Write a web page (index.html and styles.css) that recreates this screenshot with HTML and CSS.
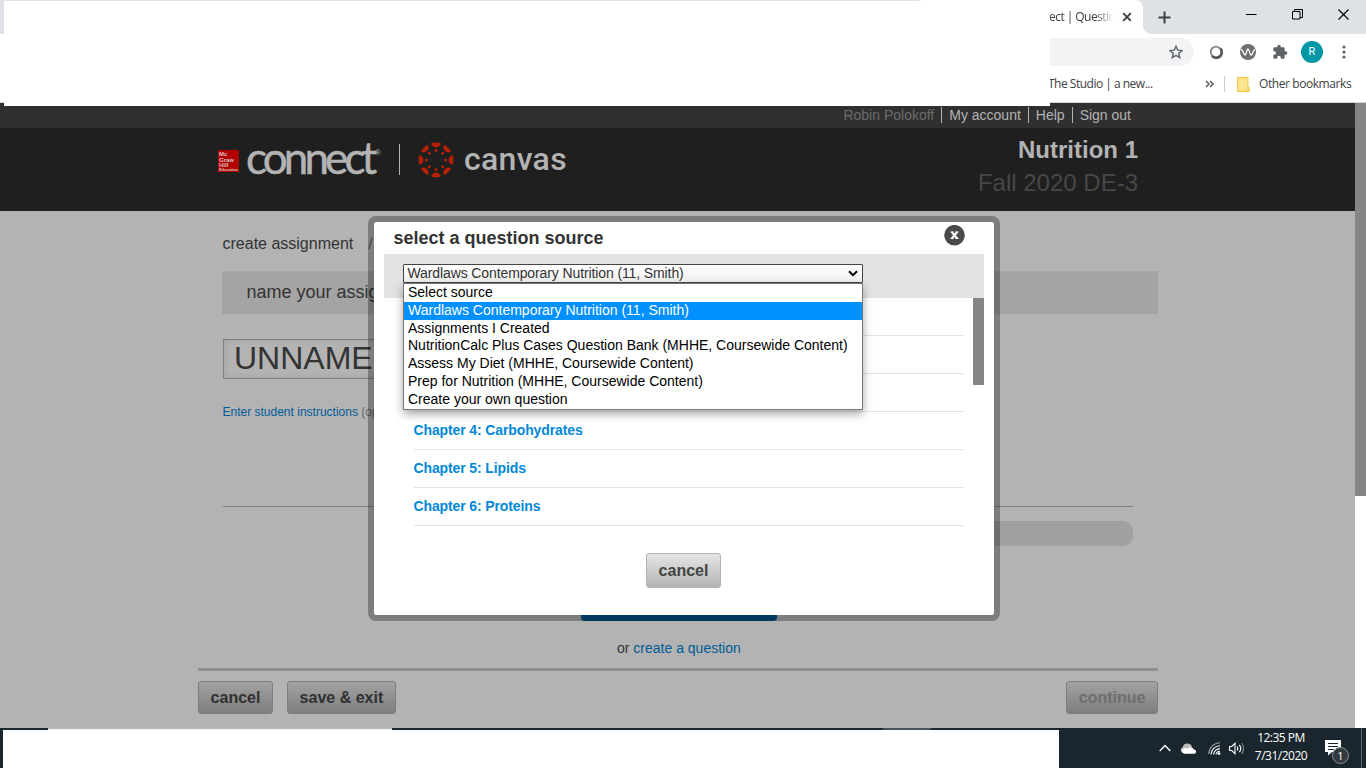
FILE: index.html
```
<!DOCTYPE html>
<html lang="en">
<head>
    <meta charset="UTF-8">
    <meta name="viewport" content="width=device-width, initial-scale=1.0">
    <title>Connect | Question source</title>
    <link rel="stylesheet" href="styles.css">
</head>
<body>
    <div class="browser">
        <div class="tab-strip">
            <div class="tab">
                <span class="tab-title">ect | Questic</span>
                <svg class="tab-close" width="10" height="10" viewBox="0 0 10 10"><path d="M1.2 1.2l7.6 7.6M8.8 1.2L1.2 8.8" stroke="#3c4043" stroke-width="1.9"/></svg>
            </div>
            <svg class="new-tab" width="13" height="13" viewBox="0 0 13 13"><path d="M6.5 .5v12M.5 6.5h12" stroke="#3c4043" stroke-width="2"/></svg>
            <div class="window-buttons">
                <svg width="11" height="11" viewBox="0 0 11 11"><path d="M0 5.5h10.5" stroke="#000"/></svg>
                <svg width="11" height="11" viewBox="0 0 11 11"><path d="M.5 2.5h7.5v7.5H.5zM2.5 2.5v-2h8v8H8" fill="none" stroke="#000"/></svg>
                <svg width="11" height="11" viewBox="0 0 11 11"><path d="M.5 .5l10 10M10.5 .5l-10 10" stroke="#000" stroke-width="1.1"/></svg>
            </div>
        </div>
        <div class="toolbar">
            <div class="omnibox">
                <svg width="14" height="14" viewBox="0 0 14 14"><path d="M7 1.2l1.7 4 4.3.4-3.300 2.800 1 4.200L7 10.400l-3.700 2.200 1-4.200L1 5.600l4.300-.4z" fill="none" stroke="#5f6368" stroke-width="1.4"/></svg>
            </div>
            <svg class="ext" width="14" height="14" viewBox="0 0 14 14"><circle cx="7" cy="7" r="5.3" fill="#fff" stroke="#858585" stroke-width="1.8"/><path d="M3 11a5.300 5.300 0 0 0 8.500-7.500" fill="none" stroke="#555" stroke-width="2.4"/></svg>
            <svg class="ext" width="16" height="16" viewBox="0 0 16 16"><circle cx="8" cy="8" r="8" fill="#6f6f6f"/><path d="M.8 5.5C3 5 3.5 11 5 11s1.5-6 3-6 1.500 6 3.200 6S13 5.500 15 5.500" fill="none" stroke="#fff" stroke-width="1.3"/></svg>
            <svg class="ext" width="16" height="16" viewBox="0 0 24 24"><path d="M20.5 11H19V7c0-1.100-.9-2-2-2h-4V3.500a2.500 2.500 0 0 0-5 0V5H4c-1.100 0-2 .9-2 2v3.800h1.500a2.700 2.700 0 0 1 0 5.400H2V20c0 1.100.9 2 2 2h3.800v-1.500a2.700 2.700 0 0 1 5.400 0V22H17c1.100 0 2-.9 2-2v-4h1.500a2.500 2.500 0 0 0 0-5z" fill="#5f6368"/></svg>
            <span class="profile">R</span>
            <svg class="menu-dots" width="4" height="14" viewBox="0 0 4 14"><g fill="#5f6368"><circle cx="2" cy="2" r="1.6"/><circle cx="2" cy="7" r="1.6"/><circle cx="2" cy="12" r="1.6"/></g></svg>
        </div>
        <div class="bookmarks">
            <span class="bookmark-studio">The Studio | a new...</span>
            <svg class="more" width="9" height="8" viewBox="0 0 9 8"><path d="M1 1l3 3-3 3M5 1l3 3-3 3" fill="none" stroke="#5f6368" stroke-width="1.6"/></svg>
            <span class="divider"></span>
            <svg class="folder" width="13" height="15" viewBox="0 0 13 15"><path d="M.6 .6h10.300v10l1.500.2v3.600H.6z" fill="#ffe694" stroke="#f5c84b" stroke-width="1.1"/><path d="M10.900 10.500c-1.200.2-1.500 1.500-1.300 3.500" fill="none" stroke="#f5c84b"/></svg>
            <span class="bookmark-other">Other bookmarks</span>
        </div>
        <div class="blank blank-top"></div>
    </div>

    <div class="viewport">
        <div class="page">
            <div class="account-bar">
                <span class="user">Robin Polokoff</span>
                <a>My account</a>
                <a>Help</a>
                <a>Sign out</a>
            </div>
            <header class="header">
                <svg class="mh-logo" width="21" height="22" viewBox="0 0 21 22">
                    <rect width="21" height="22" fill="#b00000"/>
                    <g class="mh-text" fill="#d8c0c0">
                        <text x="1" y="6">Mc</text>
                        <text x="1" y="11.5">Graw</text>
                        <text x="1" y="16.8">Hill</text>
                        <text class="mh-small" x="1" y="20.8" textLength="19">Education</text>
                    </g>
                </svg>
                <span class="connect">connect</span><span class="reg">®</span>
                <span class="logo-divider"></span>
                <svg class="canvas-icon" width="36" height="36" viewBox="-18 -18 36 36">
                    <defs>
                        <clipPath id="disc"><circle r="17.4"/></clipPath>
                        <g id="seg"><circle cy="-17.6" r="5"/><circle cy="-9.5" r="1.5"/></g>
                    </defs>
                    <g fill="#b51f06" clip-path="url(#disc)">
                        <use href="#seg"/>
                        <use href="#seg" transform="rotate(45)"/>
                        <use href="#seg" transform="rotate(90)"/>
                        <use href="#seg" transform="rotate(135)"/>
                        <use href="#seg" transform="rotate(180)"/>
                        <use href="#seg" transform="rotate(225)"/>
                        <use href="#seg" transform="rotate(270)"/>
                        <use href="#seg" transform="rotate(315)"/>
                    </g>
                </svg>
                <span class="canvas">canvas</span>
                <div class="course">
                    <h1>Nutrition 1</h1>
                    <p>Fall 2020 DE-3</p>
                </div>
            </header>

            <main class="content">
                <div class="breadcrumb"><span>create assignment</span><span class="slash">/</span></div>
                <div class="name-bar">name your assig</div>
                <div class="name-input">UNNAMED</div>
                <div class="instructions"><a>Enter student instructions</a> (optional)</div>
                <div class="rule"></div>
                <div class="pill"></div>
                <div class="add-button"></div>
                <div class="create">or <a>create a question</a></div>
                <div class="footer">
                    <button class="btn dim">cancel</button>
                    <button class="btn dim">save &amp; exit</button>
                    <button class="btn dim continue">continue</button>
                </div>
            </main>
        </div>
        <div class="scrollbar"><div class="scroll-thumb"></div></div>
    </div>

    <div class="modal">
        <div class="modal-head">
            <h2>select a question source</h2>
            <svg width="21" height="21" viewBox="0 0 21 21"><circle cx="10.5" cy="10.2" r="10.3" fill="#4a4a4a"/><path d="M6.5 7h3M11.5 7h3M6.5 13.500h3M11.500 13.500h3" stroke="#fff" stroke-width="1.2"/><path d="M7.800 7l5.400 6.500M13.200 7l-5.400 6.500" stroke="#fff" stroke-width="2"/></svg>
        </div>
        <div class="source-bar">
            <div class="select">
                <span>Wardlaws Contemporary Nutrition (11, Smith)</span>
                <svg width="10" height="7" viewBox="0 0 10 7"><path d="M1 1.300l4 3.900 4-3.900" fill="none" stroke="#000" stroke-width="2"/></svg>
                <ul class="options">
                    <li>Select source</li>
                    <li class="selected">Wardlaws Contemporary Nutrition (11, Smith)</li>
                    <li>Assignments I Created</li>
                    <li>NutritionCalc Plus Cases Question Bank (MHHE, Coursewide Content)</li>
                    <li>Assess My Diet (MHHE, Coursewide Content)</li>
                    <li>Prep for Nutrition (MHHE, Coursewide Content)</li>
                    <li>Create your own question</li>
                </ul>
            </div>
        </div>
        <div class="chapter-area">
            <ul class="chapters">
                <li></li>
                <li></li>
                <li></li>
                <li>Chapter 4: Carbohydrates</li>
                <li>Chapter 5: Lipids</li>
                <li>Chapter 6: Proteins</li>
            </ul>
            <div class="list-thumb"></div>
        </div>
        <button class="btn modal-cancel">cancel</button>
    </div>

    <div class="taskbar">
        <div class="app-marker"></div>
        <div class="app-marker app-marker-small"></div>
        <div class="blank blank-bottom"></div>
        <svg class="tray-up" width="12" height="8" viewBox="0 0 12 8"><path d="M.7 7L6 1.500 11.300 7" fill="none" stroke="#fff" stroke-width="1.3"/></svg>
        <svg class="tray-cloud" width="17" height="11" viewBox="0 0 17 11"><path d="M3 10a3 3 0 0 1-.4-5.700A5 5 0 0 1 12 3.500L9 8z" fill="#bbb"/><path d="M4 10.800a3 3 0 0 1 0-5.500c1.500-.7 2.800 0 3.300.5A4 4 0 0 1 14 6.500a2.200 2.200 0 0 1 .5 4.300z" fill="#fff"/></svg>
        <svg class="tray-wifi" width="13" height="13" viewBox="0 0 13 13"><g fill="none" stroke="#fff" stroke-width="1.1"><path d="M.8 12A11.500 11.500 0 0 1 12 .8" stroke="#9aa3a8"/><path d="M3 12.500A9 9 0 0 1 12 3.800M5.500 12.500A6.500 6.500 0 0 1 12 6.600M8 12.500a4 4 0 0 1 4-3.300"/></g><circle cx="11" cy="11.600" r="1.4" fill="#fff"/></svg>
        <svg class="tray-sound" width="17" height="13" viewBox="0 0 17 13"><g fill="none" stroke="#fff" stroke-width="1.1"><path d="M.6 4.500h2.200L6 1.300v10.400L2.800 8.500H.6z"/><path d="M8 4.500a3 3 0 0 1 0 4M10.300 2.800a6 6 0 0 1 0 7.400"/><path d="M12.600 1a9 9 0 0 1 0 11" stroke="#87918f"/></g></svg>
        <div class="clock"><span>12:35 PM</span><span>7/31/2020</span></div>
        <div class="notify">
            <svg width="16" height="16" viewBox="0 0 16 16"><path d="M0 0h16v12H7l-4 3.500V12H0z" fill="#fff"/><path d="M3 3.500h10M3 6.500h10M3 9.500h6" stroke="#1a262d"/></svg>
            <span class="badge">1</span>
        </div>
        <div class="show-desktop"></div>
    </div>
</body>
</html>
```
FILE: styles.css
```
* {
    margin: 0;
    padding: 0;
    box-sizing: border-box;
}

body {
    position: relative;
    display: flex;
    flex-direction: column;
    width: 1366px;
    height: 768px;
    overflow: hidden;
    font-family: "Liberation Sans", Arial, sans-serif;
    font-size: 14px;
    color: #333;
    background: #fff;
}

svg {
    display: block;
    flex: none;
}

ul {
    list-style: none;
}

/* browser chrome */
.browser {
    position: relative;
    height: 103px;
    border-bottom: 1px solid #d5d5df;
    background: #fff;
    font-family: "Open Sans", "Noto Sans", sans-serif;
    font-size: 12px;
    color: #3c4043;
}

.blank {
    position: absolute;
    background: #fff;
}

.blank-top {
    left: 4px;
    top: 1px;
    width: 1046px;
    height: 105px;
    z-index: 1;
}

.tab-strip {
    display: flex;
    align-items: center;
    height: 34px;
    background: #dee1e6;
}

.tab {
    position: relative;
    display: flex;
    align-items: center;
    width: 228px;
    height: 34px;
    margin-left: 915px;
    padding-left: 134px;
    border-radius: 8px 8px 0 0;
    background: #fff;
}

.tab::after {
    content: "";
    position: absolute;
    left: 100%;
    bottom: 0;
    width: 8px;
    height: 8px;
    background: radial-gradient(circle at 100% 0, #dee1e6 7.5px, #fff 8px);
}

.tab-title {
    width: 67px;
    overflow: hidden;
    white-space: nowrap;
    letter-spacing: -0.55px;
    line-height: 16px;
    -webkit-mask-image: linear-gradient(90deg, #000 68%, transparent 98%);
    mask-image: linear-gradient(90deg, #000 68%, transparent 98%);
}

.tab-close {
    margin-left: 6px;
}

.new-tab {
    margin-left: 15px;
}

.window-buttons {
    display: flex;
    gap: 35px;
    margin: -5px 17px 0 auto;
}

.toolbar {
    display: flex;
    align-items: center;
    height: 36px;
}

.omnibox {
    display: flex;
    align-items: center;
    justify-content: flex-end;
    width: 194px;
    height: 28px;
    margin-left: 1000px;
    padding-right: 11px;
    border-radius: 14px;
    background: #f1f3f4;
}

.ext {
    margin-left: 15px;
}

.ext + .ext {
    margin-left: 17px;
}

.ext + .ext + .ext {
    margin-left: 16px;
}

.profile {
    width: 22px;
    height: 22px;
    margin-left: 13px;
    border-radius: 50%;
    background: #0097a7;
    color: #fff;
    font-size: 11px;
    line-height: 22px;
    text-align: center;
    font-family: Roboto, sans-serif;
}

.menu-dots {
    margin-left: 19px;
}

.bookmarks {
    display: flex;
    align-items: center;
    height: 28px;
}

.bookmark-studio {
    width: 130px;
    margin: -2px 0 0 1048px;
    letter-spacing: -0.5px;
}

.more {
    margin-left: 27px;
}

.divider {
    width: 1px;
    height: 16px;
    margin-left: 10px;
    background: #c8cacd;
}

.folder {
    margin-left: 12px;
}

.bookmark-other {
    margin: -2px 0 0 9px;
    white-space: nowrap;
    letter-spacing: -0.42px;
}

/* page */
.viewport {
    display: flex;
    height: 625px;
}

.page {
    width: 1355px;
    background: #b3b3b3;
}

.scrollbar {
    width: 11px;
    background: #fff;
}

.scroll-thumb {
    height: 393px;
    background: #858585;
}

.account-bar {
    display: flex;
    justify-content: flex-end;
    align-items: center;
    height: 25px;
    padding: 0 224px 1px 0;
    background: #303030;
    color: #b3b3b3;
}

.account-bar .user {
    padding-right: 7px;
    color: #6b6b6b;
}

.account-bar a {
    padding: 0 7px;
    border-left: 1px solid #b3b3b3;
    line-height: 16px;
}

.account-bar a:last-child {
    padding-right: 0;
}

.header {
    display: flex;
    height: 83px;
    padding-left: 218px;
    background: #1f1f1f;
    color: #b3b3b3;
}

.mh-logo {
    margin-top: 22px;
}

.mh-text {
    font-size: 6px;
    font-weight: bold;
}

.mh-small {
    font-size: 4px;
}

.connect {
    width: 129px;
    margin: 3px 0 0 7px;
    font-family: Lato, sans-serif;
    font-size: 44px;
    line-height: 53px;
    letter-spacing: -3.9px;
    -webkit-text-stroke: 0.5px #b3b3b3;
}

.reg {
    width: 7px;
    margin-top: 20px;
    font-size: 8px;
}

.logo-divider {
    width: 1px;
    height: 31px;
    margin: 16px 0 0 17px;
    background: #b3b3b3;
}

.canvas-icon {
    margin: 14px 0 0 18px;
}

.canvas {
    margin: 11px 0 0 10px;
    font-family: Roboto, sans-serif;
    font-size: 32px;
    font-weight: 500;
    line-height: 40px;
    letter-spacing: 0.3px;
}

.course {
    margin: 5px 217px 0 auto;
    text-align: right;
    line-height: 33px;
}

.course h1 {
    font-size: 24px;
}

.course p {
    font-size: 24px;
    color: #474747;
}

.content {
    width: 960px;
    margin-left: 198px;
    padding-top: 23px;
}

.content a {
    color: #005b96;
}

.breadcrumb {
    display: flex;
    gap: 15px;
    height: 20px;
    margin-left: 24.5px;
    font-size: 16px;
    line-height: 20px;
}

.slash {
    color: #666;
}

.name-bar {
    height: 43px;
    margin: 17px 0 0 24px;
    padding-left: 24.5px;
    background: #a4a4a4;
    font-size: 18px;
    line-height: 42px;
}

.name-input {
    width: 500px;
    height: 40px;
    margin: 25px 0 0 25px;
    padding-left: 10px;
    border: 1px solid #808080;
    box-shadow: inset 0 0 6px rgba(0, 0, 0, 0.1);
    font-size: 32px;
    line-height: 37px;
}

.instructions {
    height: 20px;
    margin: 22px 0 0 24.5px;
    font-size: 12px;
    line-height: 22px;
    color: #666;
}

.rule {
    height: 1px;
    margin: 85px 25px 0;
    background: #808080;
}

.pill {
    width: 535px;
    height: 25px;
    margin: 14px 25px 0 auto;
    border-radius: 10px;
    background: #a0a0a0;
}

.add-button {
    width: 196px;
    height: 41px;
    margin: 34px 0 0 383px;
    border-radius: 4px;
    background: #005389;
}

.create {
    height: 20px;
    margin: 17px 0 0 419px;
    line-height: 20px;
}

.footer {
    display: flex;
    gap: 14px;
    margin-top: 10px;
    padding-top: 10px;
    border-top: 3px solid #8e8e8e;
}

.btn {
    padding: 0 11.6px;
    border: 1px solid #b3b3b3;
    border-radius: 3px;
    background: linear-gradient(#e6e6e6, #b3b3b3);
    color: #444;
    font: bold 16px "Liberation Sans", Arial, sans-serif;
}

.btn.dim {
    height: 33px;
    border-color: #7d7d7d;
    background: linear-gradient(#a2a2a2, #7e7e7e);
    color: #303030;
}

.btn.continue {
    margin-left: auto;
    color: #6e6e6e;
}

/* question source dialog */
.modal {
    position: absolute;
    left: 368px;
    top: 216px;
    width: 632px;
    height: 405px;
    border: 6px solid rgba(0, 0, 0, 0.3);
    border-radius: 8px;
    background: #fff;
    background-clip: padding-box;
}

.modal-head {
    display: flex;
    justify-content: space-between;
    height: 32px;
    padding: 3px 29px 0 19.4px;
}

.modal-head h2 {
    font-size: 18px;
    line-height: 26px;
}

.source-bar {
    height: 44px;
    margin: 0 10px;
    padding: 10px 19px;
    background: #e2e2e2;
}

.select {
    position: relative;
    display: flex;
    align-items: center;
    justify-content: space-between;
    width: 460px;
    height: 19px;
    padding: 0 4px 1px 3.5px;
    border: 1px solid #444;
    border-radius: 1px;
    background: linear-gradient(#fff, #f0f0f0);
    letter-spacing: -0.11px;
}

.options {
    position: absolute;
    left: -1px;
    top: 18px;
    width: 460px;
    height: 127px;
    border: 1px solid #767676;
    background: #fff;
    box-shadow: 0 4px 9px rgba(0, 0, 0, 0.35);
    color: #000;
    letter-spacing: 0;
    z-index: 1;
}

.options li {
    height: 17.8px;
    padding-left: 4px;
    line-height: 17px;
    white-space: nowrap;
}

.options .selected {
    background: #0090ff;
    color: #fff;
}

.chapter-area {
    display: flex;
    justify-content: space-between;
    margin: 0 10px 0 39.5px;
}

.chapters {
    width: 550.5px;
}

.chapters li {
    height: 38px;
    border-bottom: 1px solid #e2e2e2;
    font-weight: bold;
    line-height: 36px;
    letter-spacing: -0.12px;
    color: #0288d8;
}

.list-thumb {
    width: 11px;
    height: 87px;
    background: #858585;
}

.modal-cancel {
    display: block;
    height: 35px;
    margin: 27px 0 0 272px;
}

/* taskbar */
.taskbar {
    position: relative;
    display: flex;
    align-items: center;
    height: 40px;
    background: #1a262d;
    color: #fff;
    font-family: "Open Sans", "Noto Sans", sans-serif;
    font-size: 12px;
}

.blank-bottom {
    left: 3px;
    top: 2px;
    width: 1056px;
    height: 38px;
}

.app-marker {
    position: absolute;
    left: 48px;
    top: 0;
    width: 344px;
    height: 2px;
    border-top: 1px solid #b8b8b8;
    background: #f3f0f0;
}

.app-marker-small {
    left: 883px;
    width: 48px;
    border: none;
    background: #46535a;
}

.tray-up {
    margin-left: 1159px;
}

.tray-cloud {
    margin-left: 9px;
}

.tray-wifi {
    margin-left: 11px;
}

.tray-sound {
    margin-left: 8px;
}

.clock {
    display: flex;
    flex-direction: column;
    align-items: center;
    width: 60px;
    margin: -2px 0 0 5px;
    line-height: 18px;
    letter-spacing: -0.5px;
    white-space: nowrap;
}

.notify {
    position: relative;
    margin-left: 14px;
}

.badge {
    position: absolute;
    left: 7px;
    top: 7px;
    width: 17px;
    height: 17px;
    border: 1px solid #8b9296;
    border-radius: 50%;
    background: #333b40;
    font-size: 11px;
    line-height: 15px;
    text-align: center;
}

.show-desktop {
    width: 5px;
    height: 40px;
    margin-left: auto;
    border-left: 1px solid #5f686d;
}
```
